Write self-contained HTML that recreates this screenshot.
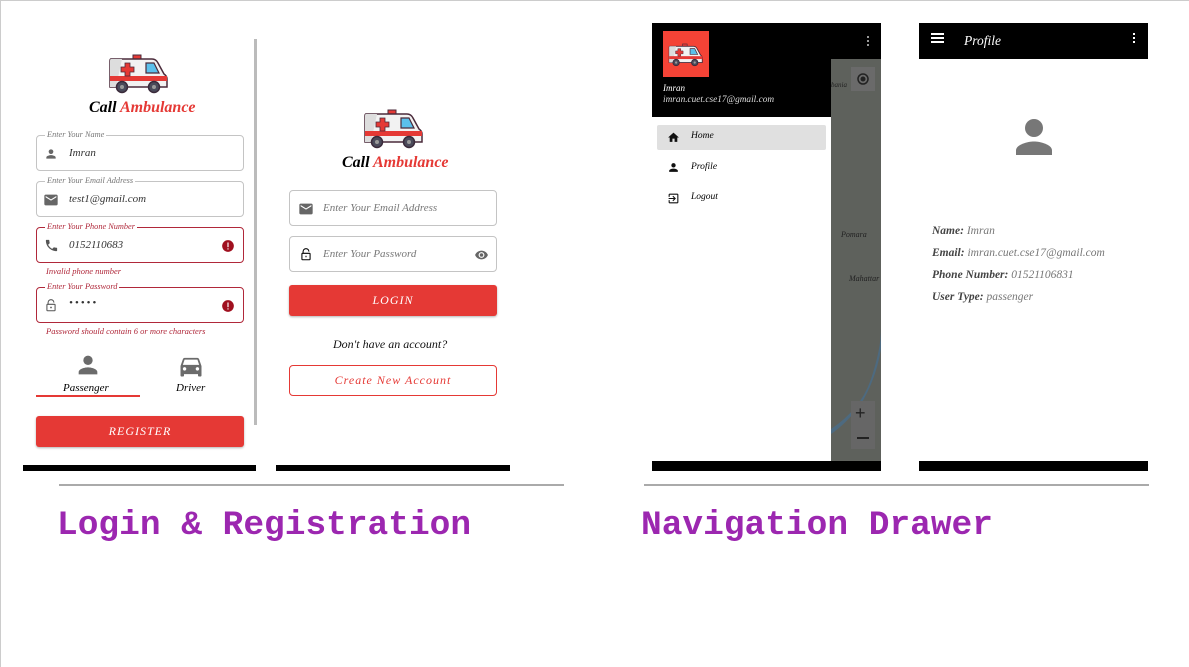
<!DOCTYPE html>
<html><head><meta charset="utf-8"><style>
*{margin:0;padding:0;box-sizing:border-box}
body{width:1189px;height:667px;background:#fff;position:relative;overflow:hidden;font-family:"Liberation Serif",serif;border-top:1px solid #ccc;border-left:1px solid #ccc}
.a{position:absolute;white-space:nowrap}
.i{font-style:italic}
.fld{position:absolute;border:1px solid #c4c4c4;border-radius:4px;background:#fff}
.err{border-color:#b0283a}
.lbl{position:absolute;top:-6px;left:8px;background:#fff;padding:0 2px;font-size:8.3px;font-style:italic;color:#777;line-height:10px;white-space:nowrap}
.err .lbl{color:#b0283a}
.txt{position:absolute;font-style:italic;font-size:11px;color:#333;white-space:nowrap}
.red{color:#e53935}
.btn{position:absolute;background:#e53935;color:#fff;border-radius:3px;text-align:center;font-style:italic;letter-spacing:1px;box-shadow:0 1px 2px rgba(0,0,0,.3)}
.title{position:absolute;font-family:"Liberation Mono",monospace;font-weight:bold;color:#9c27b0;font-size:34.5px}
.hr{position:absolute;height:2px;background:#aaa}
.bar{position:absolute;background:#000}
</style></head><body>

<svg width="0" height="0" style="position:absolute"><defs>
<g id="amb">
<rect x="25" y="1" width="8" height="4" fill="#e53935" stroke="#4a2a3a" stroke-width="1"/>
<path d="M3 5 H44 Q48 5 50 9 L56 20 Q59 22 59 25 V33 H2 V7 Q2 5 3 5Z" fill="#f2f2f2" stroke="#4a2a3a" stroke-width="1.5"/>
<path d="M2 7 Q2 5 3 5 H14 L8 33 H2Z" fill="#ddd"/>
<rect x="2" y="22" width="57" height="5" fill="#e53935"/>
<path d="M38 9 H46 L51 19 H38Z" fill="#5bc0eb" stroke="#4a2a3a" stroke-width="1.2"/>
<path d="M17 9 h5 v4 h4 v5 h-4 v4 h-5 v-4 h-4 v-5 h4z" fill="#e53935" stroke="#4a2a3a" stroke-width="0.8"/>
<circle cx="14" cy="33" r="5.5" fill="#4a4a5a" stroke="#3a2a3a" stroke-width="1.5"/><circle cx="14" cy="33" r="2" fill="#999"/>
<circle cx="46" cy="33" r="5.5" fill="#4a4a5a" stroke="#3a2a3a" stroke-width="1.5"/><circle cx="46" cy="33" r="2" fill="#999"/>
</g>
<g id="person"><circle cx="12" cy="8" r="4"/><path d="M4 20v-2c0-2.7 5.3-4 8-4s8 1.3 8 4v2z"/></g>
<g id="mail"><path d="M20 4H4C2.9 4 2 4.9 2 6v12c0 1.1.9 2 2 2h16c1.1 0 2-.9 2-2V6c0-1.1-.9-2-2-2zm0 4l-8 5-8-5V6l8 5 8-5v2z"/></g>
<g id="lock"><path d="M7 10V7a5 5 0 0 1 10 0" fill="none" stroke="currentColor" stroke-width="1.8"/><rect x="5" y="10" width="14" height="11" rx="1" fill="none" stroke="currentColor" stroke-width="1.8"/><circle cx="12" cy="15.5" r="1.5"/></g>
<g id="alert"><circle cx="12" cy="12" r="10" fill="#a0101f"/><rect x="11" y="6" width="2" height="8" fill="#fff"/><rect x="11" y="16" width="2" height="2" fill="#fff"/></g>
</defs></svg>

<!-- Register panel -->
<svg class="a" style="left:107px;top:53px" width="62" height="40" viewBox="0 0 62 40"><use href="#amb"/></svg>
<div class="a i" style="left:88px;top:98px;font-size:16px;font-weight:bold">Call <span class="red">Ambulance</span></div>

<div class="fld" style="left:35px;top:134px;width:208px;height:36px"><div class="lbl">Enter Your Name</div>
<svg class="a" style="left:7px;top:11px" width="14" height="14" viewBox="0 0 24 24" fill="#666"><use href="#person"/></svg>
<div class="txt" style="left:32px;top:11px">Imran</div></div>

<div class="fld" style="left:35px;top:180px;width:208px;height:36px"><div class="lbl">Enter Your Email Address</div>
<svg class="a" style="left:6px;top:10px" width="16" height="16" viewBox="0 0 24 24" fill="#666"><use href="#mail"/></svg>
<div class="txt" style="left:32px;top:11px">test1@gmail.com</div></div>

<div class="fld err" style="left:35px;top:226px;width:208px;height:36px"><div class="lbl">Enter Your Phone Number</div>
<svg class="a" style="left:7px;top:10px" width="15" height="15" viewBox="0 0 24 24" fill="#555"><path d="M6.6 10.8c1.4 2.8 3.8 5.1 6.6 6.6l2.2-2.2c.3-.3.7-.4 1-.2 1.1.4 2.300.6 3.6.6.6 0 1 .4 1 1V20c0 .6-.4 1-1 1C10.6 21 3 13.4 3 4c0-.6.4-1 1-1h3.5c.6 0 1 .4 1 1 0 1.3.2 2.5.6 3.6.1.3 0 .7-.2 1z"/></svg>
<div class="txt" style="left:32px;top:11px">0152110683</div>
<svg class="a" style="left:184px;top:11px" width="14" height="14" viewBox="0 0 24 24"><use href="#alert"/></svg></div>
<div class="a i" style="left:45px;top:265px;font-size:8.5px;color:#b0283a">Invalid phone number</div>

<div class="fld err" style="left:35px;top:286px;width:208px;height:36px"><div class="lbl">Enter Your Password</div>
<svg class="a" style="left:7px;top:10px;color:#555" width="14" height="15" viewBox="0 0 24 24" fill="#555"><use href="#lock"/></svg>
<div class="txt" style="left:32px;top:9px;letter-spacing:2px">•••••</div>
<svg class="a" style="left:184px;top:11px" width="14" height="14" viewBox="0 0 24 24"><use href="#alert"/></svg></div>
<div class="a i" style="left:45px;top:325px;font-size:8.5px;color:#b0283a">Password should contain 6 or more characters</div>

<svg class="a" style="left:73px;top:350px" width="28" height="28" viewBox="0 0 24 24" fill="#6b6b6b"><use href="#person"/></svg>
<div class="a i" style="left:62px;top:381px;font-size:11px">Passenger</div>
<div class="a" style="left:35px;top:394px;width:104px;height:1.5px;background:#e53935"></div>
<svg class="a" style="left:176px;top:351px" width="28" height="28" viewBox="0 0 24 24" fill="#6b6b6b"><path d="M18.9 6c-.2-.6-.8-1-1.4-1h-11c-.7 0-1.2.4-1.4 1L3 12v8c0 .6.4 1 1 1h1c.6 0 1-.4 1-1v-1h12v1c0 .6.4 1 1 1h1c.6 0 1-.4 1-1v-8l-2.1-6zM6.5 16c-.8 0-1.5-.7-1.5-1.5S5.7 13 6.5 13s1.5.7 1.5 1.5S7.3 16 6.5 16zm11 0c-.8 0-1.5-.7-1.5-1.5s.7-1.5 1.5-1.5 1.5.7 1.5 1.5-.7 1.5-1.5 1.5zM5 11l1.5-4.5h11L19 11H5z"/></svg>
<div class="a i" style="left:175px;top:381px;font-size:11px">Driver</div>
<div class="btn" style="left:35px;top:415px;width:208px;height:31px;line-height:31px;font-size:12px">REGISTER</div>
<div class="a" style="left:253px;top:38px;width:3px;height:386px;background:#bbb"></div>
<div class="bar" style="left:22px;top:464px;width:233px;height:6px"></div>

<!-- Login panel -->
<svg class="a" style="left:362px;top:108px" width="62" height="40" viewBox="0 0 62 40"><use href="#amb"/></svg>
<div class="a i" style="left:341px;top:153px;font-size:16px;font-weight:bold">Call <span class="red">Ambulance</span></div>
<div class="fld" style="left:288px;top:189px;width:208px;height:36px">
<svg class="a" style="left:8px;top:10px" width="16" height="16" viewBox="0 0 24 24" fill="#666"><use href="#mail"/></svg>
<div class="txt" style="left:33px;top:11px;color:#777">Enter Your Email Address</div></div>
<div class="fld" style="left:288px;top:235px;width:208px;height:36px">
<svg class="a" style="left:9px;top:10px" width="14" height="15" viewBox="0 0 24 24" fill="#555"><use href="#lock"/></svg>
<div class="txt" style="left:33px;top:11px;color:#777">Enter Your Password</div>
<svg class="a" style="left:184px;top:11px" width="15" height="14" viewBox="0 0 24 24" fill="#666"><path d="M12 4.5C7 4.5 2.7 7.6 1 12c1.7 4.4 6 7.5 11 7.5s9.3-3.100 11-7.5c-1.7-4.4-6-7.5-11-7.5zM12 17a5 5 0 1 1 0-10 5 5 0 0 1 0 10zm0-8a3 3 0 1 0 0 6 3 3 0 0 0 0-6z"/></svg></div>
<div class="btn" style="left:288px;top:284px;width:208px;height:31px;line-height:31px;font-size:12px">LOGIN</div>
<div class="a i" style="left:332px;top:336px;font-size:12px;color:#111">Don't have an account?</div>
<div class="a i" style="left:288px;top:364px;width:208px;height:31px;border:1.5px solid #e53935;border-radius:4px;text-align:center;line-height:28px;font-size:12px;color:#e53935;letter-spacing:1px">Create New Account</div>
<div class="bar" style="left:275px;top:464px;width:234px;height:6px"></div>

<div class="hr" style="left:58px;top:483px;width:505px"></div>
<div class="title" style="left:56px;top:505px">Login &amp; Registration</div>

<!-- Drawer -->
<div class="a" style="left:651px;top:22px;width:229px;height:448px;background:#fff"></div>
<div class="a" style="left:830px;top:58px;width:50px;height:402px;background:#5e615c"></div>
<svg class="a" style="left:830px;top:58px" width="50" height="402" viewBox="0 0 50 402">
<path d="M0 370 Q30 350 40 320 Q50 290 50 270 L50 290 Q45 320 30 345 Q15 365 0 375Z" fill="#4d6a80"/>
<rect x="20" y="8" width="24" height="24" fill="#6a6a6a"/><circle cx="32" cy="20" r="5" fill="none" stroke="#222" stroke-width="1.5"/><circle cx="32" cy="20" r="2.5" fill="#222"/>
<text x="10" y="178" font-family="Liberation Serif" font-style="italic" font-size="8" fill="#222">Pomara</text>
<text x="18" y="222" font-family="Liberation Serif" font-style="italic" font-size="8" fill="#222">Mahattar</text>
<text x="0" y="28" font-family="Liberation Serif" font-style="italic" font-size="7" fill="#222">bania</text>
<rect x="20" y="342" width="24" height="48" fill="#666"/>
<text x="24" y="360" font-size="18" fill="#222" font-family="Liberation Sans">+</text>
<rect x="26" y="378" width="12" height="2" fill="#222"/>
</svg>
<div class="bar" style="left:651px;top:22px;width:229px;height:36px"></div>
<div class="a" style="left:866px;top:35px;width:2px;height:2px;background:#999;box-shadow:0 4px #999,0 8px #999"></div>
<div class="bar" style="left:651px;top:22px;width:179px;height:94px"></div>
<div class="a" style="left:662px;top:30px;width:46px;height:46px;background:#f44336"></div>
<svg class="a" style="left:667px;top:42px" width="36" height="24" viewBox="0 0 62 40"><use href="#amb"/></svg>
<div class="a i" style="left:662px;top:82px;font-size:9px;color:#fff">Imran</div>
<div class="a i" style="left:662px;top:94px;font-size:9.3px;color:#ddd">imran.cuet.cse17@gmail.com</div>
<div class="a" style="left:656px;top:124px;width:169px;height:25px;background:#e0e0e0;border-radius:2px"></div>
<svg class="a" style="left:666px;top:130px" width="13" height="13" viewBox="0 0 24 24" fill="#111"><path d="M10 20v-6h4v6h5v-8h3L12 3 2 12h3v8z"/></svg>
<div class="a i" style="left:690px;top:130px;font-size:9.5px">Home</div>
<svg class="a" style="left:666px;top:160px" width="13" height="13" viewBox="0 0 24 24" fill="#111"><use href="#person"/></svg>
<div class="a i" style="left:690px;top:161px;font-size:9.5px">Profile</div>
<svg class="a" style="left:666px;top:191px" width="13" height="13" viewBox="0 0 24 24" fill="#111"><path d="M10.1 15.6l1.4 1.4 5-5-5-5-1.4 1.4 2.6 2.6H3v2h9.7l-2.6 2.6zM19 3H5c-1.1 0-2 .9-2 2v4h2V5h14v14H5v-4H3v4c0 1.1.9 2 2 2h14c1.1 0 2-.9 2-2V5c0-1.1-.9-2-2-2z"/></svg>
<div class="a i" style="left:690px;top:191px;font-size:9.5px">Logout</div>
<div class="bar" style="left:651px;top:460px;width:229px;height:10px"></div>

<!-- Profile -->
<div class="bar" style="left:918px;top:22px;width:229px;height:36px"></div>
<div class="a" style="left:930px;top:36px;width:13px;height:2px;background:#fff;box-shadow:0 4px #fff,0 -4px #fff"></div>
<div class="a i" style="left:963px;top:32px;font-size:13.5px;color:#fff">Profile</div>
<div class="a" style="left:1132px;top:36px;width:2px;height:2px;background:#fff;box-shadow:0 4px #fff,0 -4px #fff"></div>
<svg class="a" style="left:1006px;top:109px" width="54" height="54" viewBox="0 0 24 24" fill="#777"><use href="#person"/></svg>
<div class="a i" style="left:931px;top:219px;font-size:11.5px;color:#777;line-height:22px"><b style="color:#444">Name:</b> Imran<br><b style="color:#444">Email:</b> imran.cuet.cse17@gmail.com<br><b style="color:#444">Phone Number:</b> 01521106831<br><b style="color:#444">User Type:</b> passenger</div>
<div class="bar" style="left:918px;top:460px;width:229px;height:10px"></div>

<div class="hr" style="left:643px;top:483px;width:505px"></div>
<div class="title" style="left:640px;top:505px">Navigation Drawer</div>
</body></html>
